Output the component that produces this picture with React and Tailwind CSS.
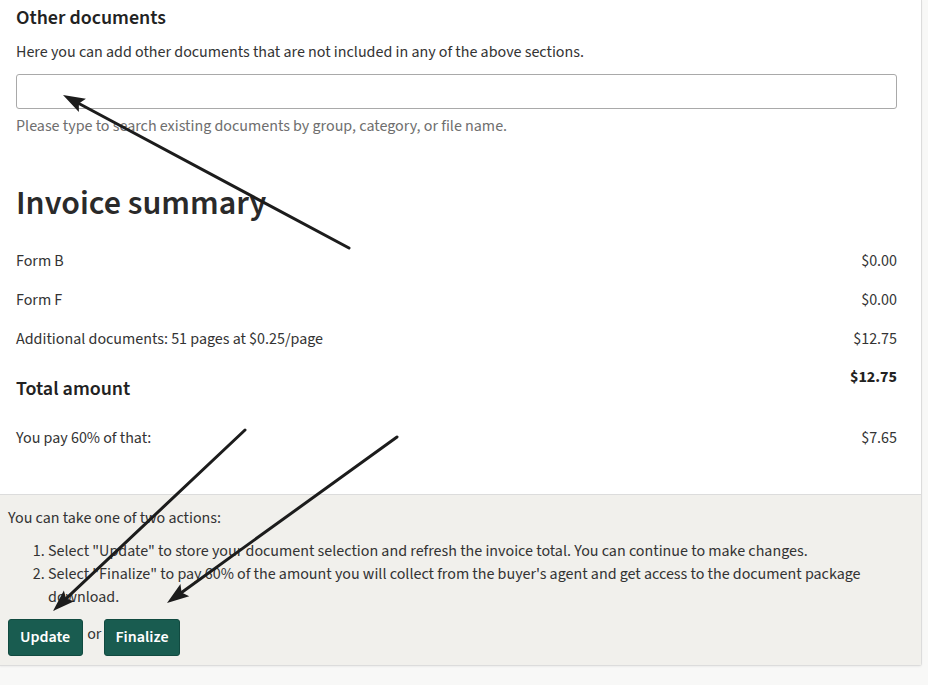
import React from "react";

function Arrow({ x1, y1, x2, y2 }) {
  const dx = x2 - x1;
  const dy = y2 - y1;
  const len = Math.hypot(dx, dy);
  const ux = dx / len;
  const uy = dy / len;
  const hl = 22;
  const hw = 7.5;
  const bx = x2 - ux * hl;
  const by = y2 - uy * hl;
  const px = -uy;
  const py = ux;
  const lx = x2 - ux * (hl - 4);
  const ly = y2 - uy * (hl - 4);
  const pts = `${x2},${y2} ${bx + px * hw},${by + py * hw} ${lx},${ly} ${bx - px * hw},${by - py * hw}`;
  return (
    <g>
      <line x1={x1} y1={y1} x2={lx} y2={ly} stroke="#1c1c1c" strokeWidth="3" strokeLinecap="round" />
      <polygon points={pts} fill="#1c1c1c" />
    </g>
  );
}

function Row({ label, value }) {
  return (
    <div className="flex justify-between items-start h-[39px]">
      <span>{label}</span>
      <span>{value}</span>
    </div>
  );
}

export default function App() {
  return (
    <div
      className="relative w-[928px] h-[685px] overflow-hidden bg-[#f8f8f7] text-[#333]"
      style={{ fontFamily: '"Source Sans Pro", "Source Sans 3", Lato, sans-serif' }}
    >
      <div className="w-[922px] bg-white border-r border-b border-[#dcdcdc] rounded-br-[3px] shadow-[0_1px_2px_rgba(0,0,0,0.05)]">
        <div className="pl-4 pr-6 pt-[6px]">
          <h3 className="text-[20px] leading-[24px] font-semibold text-[#222]">Other documents</h3>
          <p className="mt-[12px] text-[16px] leading-[20px]">
            Here you can add other documents that are not included in any of the above sections.
          </p>
          <input
            type="text"
            className="mt-[12px] block w-full h-[35px] border border-[#a9a9a9] rounded-[3px] bg-white outline-none"
          />
          <p className="mt-[7px] text-[16px] leading-[20px] text-[#6e6e6e]">
            Please type to search existing documents by group, category, or file name.
          </p>
          <h2 className="mt-[48px] text-[34px] leading-[40px] font-semibold text-[#2a2a2a]">Invoice summary</h2>
          <div className="mt-[27px] text-[16px] leading-[20px]">
            <Row label="Form B" value="$0.00" />
            <Row label="Form F" value="$0.00" />
            <Row label="Additional documents: 51 pages at $0.25/page" value="$12.75" />
            <div className="flex justify-between items-start h-[60px]">
              <span className="text-[20px] leading-[24px] font-semibold text-[#222] mt-[9px]">Total amount</span>
              <span className="font-bold text-[#222] -mt-[1px]">$12.75</span>
            </div>
            <Row label="You pay 60% of that:" value="$7.65" />
          </div>
          <div className="h-[27px]" />
        </div>
        <div className="bg-[#f1f0ec] border-t border-[#dcdcdc] px-2 pt-[12px] pb-[9px] text-[16px] leading-[23px]">
          <p>You can take one of two actions:</p>
          <ol className="list-decimal pl-[40px] mt-[10px]">
            <li>Select "Update" to store your document selection and refresh the invoice total. You can continue to make changes.</li>
            <li>Select "Finalize" to pay 60% of the amount you will collect from the buyer's agent and get access to the document package download.</li>
          </ol>
          <div className="mt-[10px] flex items-center">
            <button className="h-[37px] pl-[11px] pr-[12px] rounded-[3px] bg-[#195c50] border border-[#114a40] text-white font-semibold text-[16px]">
              Update
            </button>
            <span className="ml-[4px] mr-[3px] -mt-[6px]">or</span>
            <button className="h-[37px] px-[10px] rounded-[3px] bg-[#195c50] border border-[#114a40] text-white font-semibold text-[16px]">
              Finalize
            </button>
          </div>
        </div>
      </div>
      <svg className="absolute inset-0 pointer-events-none" width="928" height="685">
        <Arrow x1={349} y1={248} x2={63} y2={95} />
        <Arrow x1={245} y1={430} x2={53} y2={611} />
        <Arrow x1={397} y1={437} x2={167} y2={603} />
      </svg>
    </div>
  );
}
